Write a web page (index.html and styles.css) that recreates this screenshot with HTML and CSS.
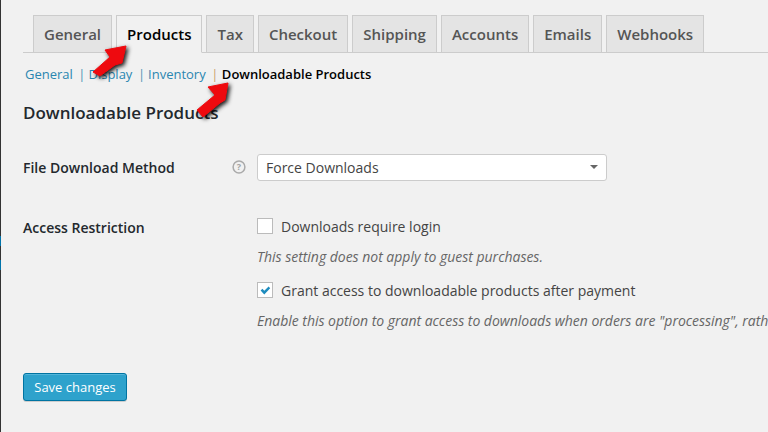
FILE: index.html
```html
<!DOCTYPE html>
<html lang="en">
<head>
    <meta charset="UTF-8">
    <meta name="viewport" content="width=device-width, initial-scale=1.0">
    <title>Downloadable Products</title>
    <link rel="stylesheet" href="styles.css">
</head>
<body>
    <div class="edge">
        <span class="edge-mark edge-mark-1"></span>
        <span class="edge-mark edge-mark-2"></span>
    </div>

    <div class="wrap">
        <nav class="tabs">
            <a class="tab" href="#">General</a>
            <a class="tab active" href="#">Products</a>
            <a class="tab" href="#">Tax</a>
            <a class="tab" href="#">Checkout</a>
            <a class="tab" href="#">Shipping</a>
            <a class="tab" href="#">Accounts</a>
            <a class="tab" href="#">Emails</a>
            <a class="tab" href="#">Webhooks</a>
        </nav>

        <ul class="subnav">
            <li><a href="#">General</a></li>
            <li class="sep">|</li>
            <li><a href="#">Display</a></li>
            <li class="sep">|</li>
            <li><a href="#">Inventory</a></li>
            <li class="sep sep-last">|</li>
            <li class="current">Downloadable Products</li>
        </ul>

        <h2 class="section-title">Downloadable Products</h2>

        <div class="form-row row-method">
            <label class="row-label">File Download Method</label>
            <span class="help">
                <svg width="14" height="14" viewBox="0 0 14 14">
                    <circle cx="7" cy="7" r="5.9" fill="none" stroke="#aaa" stroke-width="1.5"/>
                    <text x="7" y="10.3" text-anchor="middle" class="help-mark">?</text>
                </svg>
            </span>
            <div class="select">
                <span>Force Downloads</span>
                <span class="caret"></span>
            </div>
        </div>

        <div class="form-row row-access">
            <label class="row-label">Access Restriction</label>
            <span class="help"></span>
            <div class="options">
                <label class="check">
                    <span class="box"></span>
                    Downloads require login
                </label>
                <p class="desc">This setting does not apply to guest purchases.</p>
                <label class="check check-2">
                    <span class="box">
                        <svg width="14" height="14" viewBox="0 0 14 14">
                            <path d="M2.6 7.4 L4.4 5.8 L6.3 7.8 L10.6 3.4 L12.2 5.2 L6.3 11.6 Z" fill="#1e8cbe"/>
                        </svg>
                    </span>
                    Grant access to downloadable products after payment
                </label>
                <p class="desc desc-2">Enable this option to grant access to downloads when orders are "processing", rath</p>
            </div>
        </div>

        <button class="save-btn">Save changes</button>
    </div>

    <!-- annotation arrows -->
    <svg class="arrow arrow-1" width="44" height="40" viewBox="0 0 44 40">
        <path d="M39 3 L18 7 L23 14 L6 29 L13 33 L28 22 L35 20 Z" fill="#ee0a0f" stroke="#ee0a0f" stroke-linejoin="round"/>
    </svg>
    <svg class="arrow arrow-2" width="44" height="42" viewBox="0 0 44 42">
        <path d="M41 2 L21 6 L28 14 L10 29 L16 36 L33 22 L38 19 Z" fill="#ee0a0f" stroke="#ee0a0f" stroke-linejoin="round"/>
    </svg>
</body>
</html>
```

FILE: styles.css
```css
* {
    box-sizing: border-box;
}
html, body {
    height: 100%;
}
body {
    margin: 0;
    display: flex;
    overflow: hidden;
    background-color: #f1f1f1;
    color: #444;
    font-family: "Open Sans", sans-serif;
    font-size: 14px;
}
a {
    text-decoration: none;
}

/* dark strip at the left edge */
.edge {
    width: 1px;
    flex: none;
    background-color: #333;
    padding-top: 236px;
}
.edge-mark {
    display: block;
    background-color: #0073aa;
}
.edge-mark-1 {
    height: 10px;
    margin-bottom: 14px;
}
.edge-mark-2 {
    height: 10px;
}

.wrap {
    flex: 1;
    min-width: 0;
    padding: 15px 0 0 22px;
}

/* tabs */
.tabs {
    display: flex;
    gap: 4px;
    height: 38px;
    padding-left: 10px;
    border-bottom: 1px solid #ccc;
}
.tab {
    height: 38px;
    padding: 0 10px;
    border: 1px solid #ccc;
    background-color: #e4e4e4;
    color: #555;
    font-size: 15px;
    font-weight: 600;
    line-height: 36px;
}
.tab.active {
    background-color: #f1f1f1;
    border-bottom-color: #f1f1f1;
    color: #000;
}

/* sub navigation */
.subnav {
    display: flex;
    list-style: none;
    margin: 0;
    padding: 12px 0 0 2px;
    font-size: 13px;
    line-height: 18px;
}
.subnav a {
    color: #2a86b0;
}
.subnav .sep {
    margin: 0 3px 0 5.5px;
    color: #4f93b5;
}
.subnav .sep-last {
    margin: 0 3.5px 0 5.5px;
    color: #c9a26e;
}
.subnav .current {
    color: #000;
    font-weight: 600;
}

.section-title {
    margin: 18px 0 0;
    color: #23282d;
    font-size: 17px;
    font-weight: 600;
    line-height: 24px;
}

/* settings rows */
.form-row {
    display: flex;
    align-items: flex-start;
}
.row-method {
    margin-top: 29px;
}
.row-access {
    margin-top: 33px;
}
.row-label {
    flex: none;
    width: 209px;
    color: #23282d;
    font-size: 14px;
    font-weight: 600;
    line-height: 27px;
}
.help {
    display: block;
    flex: none;
    width: 25px;
    height: 14px;
    margin-top: 6px;
}
.help svg {
    display: block;
}
.help-mark {
    fill: #a3a3a3;
    font-family: "Open Sans", sans-serif;
    font-size: 9px;
    font-weight: 700;
}
.select {
    display: flex;
    justify-content: space-between;
    align-items: center;
    width: 350px;
    height: 27px;
    padding: 0 8px;
    background-color: #fff;
    border: 1px solid #ccc;
    border-radius: 3px;
    color: #444;
    font-size: 14px;
}
.caret {
    width: 0;
    height: 0;
    margin: 0 0 2px 0;
    border-left: 4px solid transparent;
    border-right: 4px solid transparent;
    border-top: 4px solid #666;
}

.options {
    flex: none;
    padding-top: 3px;
    white-space: nowrap;
}
.check {
    display: flex;
    align-items: center;
    gap: 8px;
    height: 18px;
    color: #444;
    font-size: 14px;
}
.check-2 {
    margin-top: 15px;
}
.box {
    display: block;
    width: 16px;
    height: 16px;
    padding: 0;
    background-color: #fff;
    border: 1px solid #bbb;
}
.box svg {
    display: block;
}
.desc {
    margin: 13px 0 0;
    color: #666;
    font-size: 14px;
    font-style: italic;
    letter-spacing: -0.02px;
    line-height: 18px;
}

.save-btn {
    display: block;
    margin: 43px 0 0;
    width: 104px;
    height: 28px;
    padding: 0 0 1px;
    background-color: #2ea2cc;
    border: 1px solid #0074a2;
    border-radius: 3px;
    box-shadow: inset 0 1px 0 rgba(120, 200, 230, 0.5), 0 1px 0 rgba(0, 0, 0, 0.15);
    color: #fff;
    font-family: "Open Sans", sans-serif;
    font-size: 13px;
}

/* arrows drawn over the page */
.arrow {
    position: absolute;
    filter: drop-shadow(2px 2px 2px rgba(0, 0, 0, 0.9));
}
.arrow-1 {
    left: 87px;
    top: 43px;
}
.arrow-2 {
    left: 187px;
    top: 81px;
}
```
